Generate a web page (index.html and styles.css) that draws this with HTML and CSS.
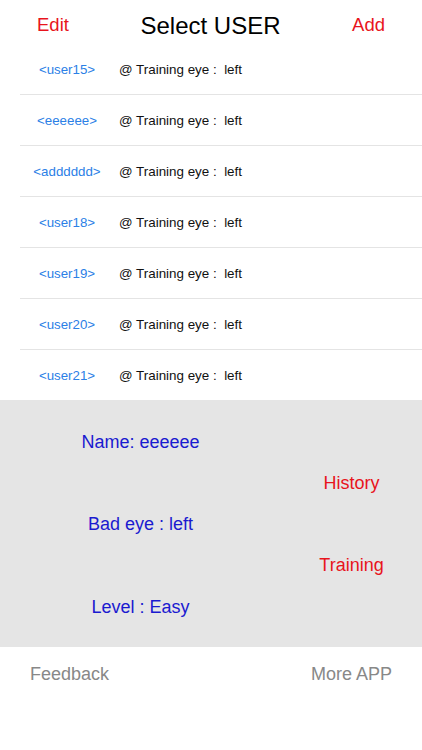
FILE: index.html
```html
<!DOCTYPE html>
<html>
<head>
<meta charset="utf-8">
<link rel="stylesheet" href="styles.css">
</head>
<body>
<div class="screen">
  <header class="nav">
    <span class="nav-btn">Edit</span>
    <span class="nav-title">Select USER</span>
    <span class="nav-btn">Add</span>
  </header>
  <ul class="user-list">
    <li class="user-row"><span class="user-name">&lt;user15&gt;</span><span class="user-eye">@ Training eye :&nbsp; left</span></li>
    <li class="user-row"><span class="user-name">&lt;eeeeee&gt;</span><span class="user-eye">@ Training eye :&nbsp; left</span></li>
    <li class="user-row"><span class="user-name">&lt;adddddd&gt;</span><span class="user-eye">@ Training eye :&nbsp; left</span></li>
    <li class="user-row"><span class="user-name">&lt;user18&gt;</span><span class="user-eye">@ Training eye :&nbsp; left</span></li>
    <li class="user-row"><span class="user-name">&lt;user19&gt;</span><span class="user-eye">@ Training eye :&nbsp; left</span></li>
    <li class="user-row"><span class="user-name">&lt;user20&gt;</span><span class="user-eye">@ Training eye :&nbsp; left</span></li>
    <li class="user-row"><span class="user-name">&lt;user21&gt;</span><span class="user-eye">@ Training eye :&nbsp; left</span></li>
  </ul>
  <section class="detail">
    <span class="info r1">Name: eeeeee</span>
    <span class="action r2">History</span>
    <span class="info r3">Bad eye : left</span>
    <span class="action r4">Training</span>
    <span class="info r5">Level : Easy</span>
  </section>
  <footer class="footer">
    <span class="foot-btn">Feedback</span>
    <span class="foot-btn">More APP</span>
  </footer>
</div>
</body>
</html>
```

FILE: styles.css
```css
* { box-sizing: border-box; }
html, body {
  margin: 0;
  padding: 0;
  background: #ffffff;
}
body {
  font-family: "Liberation Sans", Arial, Helvetica, sans-serif;
}
.screen {
  width: 422px;
  height: 750px;
  display: flex;
  flex-direction: column;
  background: #fff;
}
.nav {
  height: 44px;
  padding: 7px 37px 0 37px;
  display: flex;
  align-items: center;
  justify-content: space-between;
}
.nav-btn {
  color: #e8141c;
  font-size: 18.5px;
  line-height: 1;
}
.nav-title {
  color: #000;
  font-size: 24px;
  line-height: 1;
}
.user-list {
  list-style: none;
  margin: 0;
  padding: 0;
}
.user-row {
  height: 51px;
  margin-left: 20px;
  border-bottom: 1px solid #e4e4e4;
  display: flex;
  align-items: center;
  padding-top: 1px;
}
.user-row:last-child {
  border-bottom: none;
  height: 50px;
}
.user-name {
  width: 94px;
  text-align: center;
  color: #2b80e6;
  font-size: 13.3px;
  margin-right: 5px;
}
.user-eye {
  color: #111;
  font-size: 13.4px;
}
.detail {
  height: 247px;
  background: #e5e5e5;
  display: grid;
  grid-template-columns: 281px 1fr;
  grid-template-rows: repeat(5, 41.25px);
  padding-top: 21px;
  align-items: center;
}
.info {
  grid-column: 1;
  justify-self: center;
  color: #1a1ad0;
  font-size: 18px;
  line-height: 1;
}
.action {
  grid-column: 2;
  justify-self: center;
  color: #e8141c;
  font-size: 18px;
  line-height: 1;
}
.r1 { grid-row: 1; }
.r2 { grid-row: 2; }
.r3 { grid-row: 3; }
.r4 { grid-row: 4; }
.r5 { grid-row: 5; }
.footer {
  height: 53px;
  padding: 1px 30px 0 30px;
  display: flex;
  align-items: center;
  justify-content: space-between;
}
.foot-btn {
  color: #888888;
  font-size: 18px;
  line-height: 1;
}
```
